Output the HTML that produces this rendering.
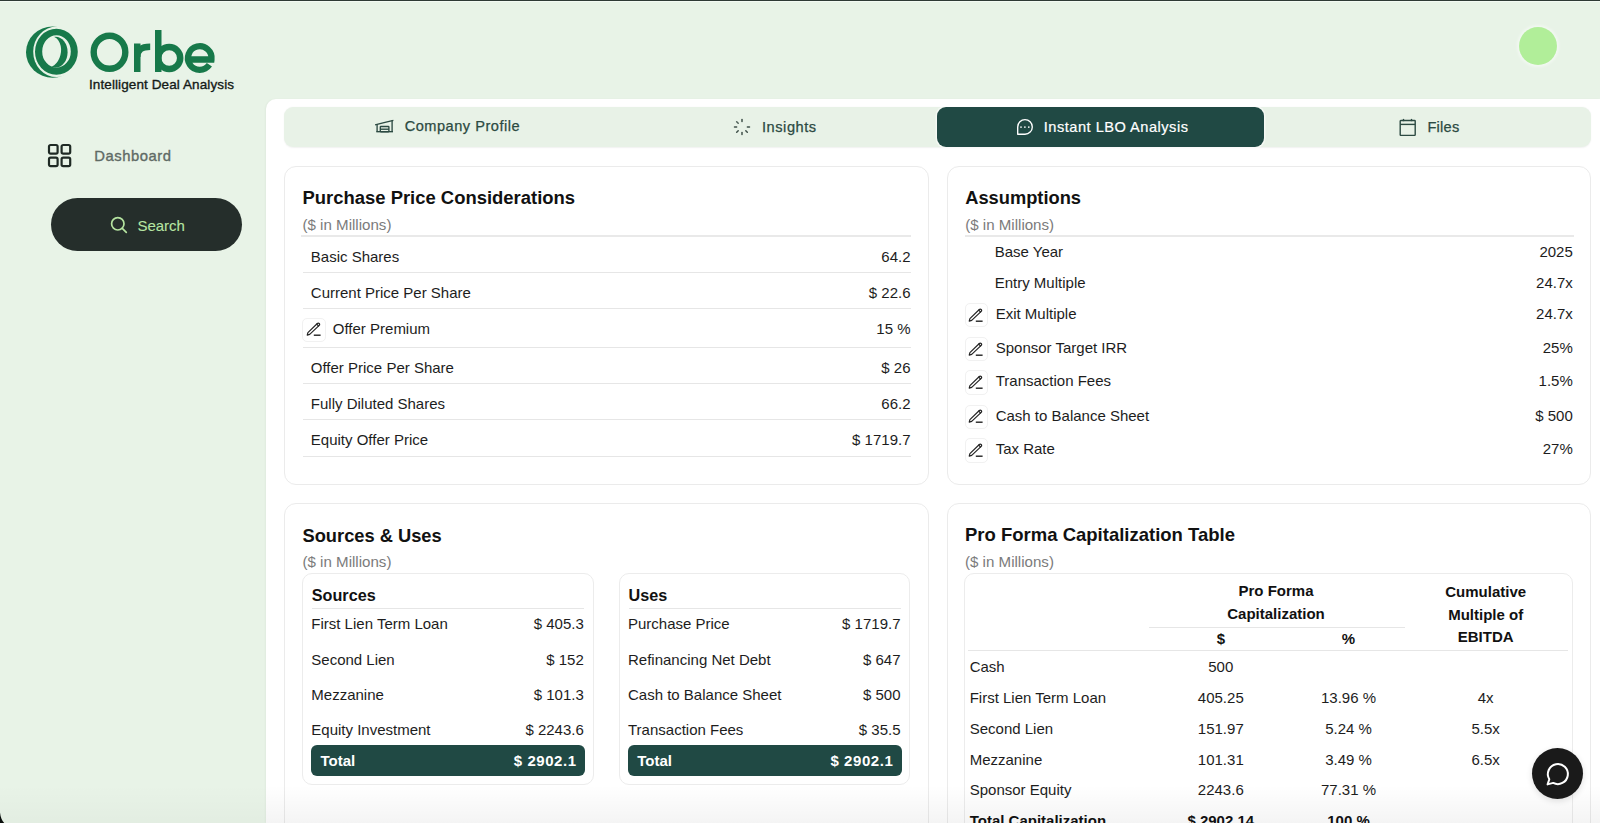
<!DOCTYPE html>
<html><head><meta charset="utf-8"><title>Orbe - Instant LBO Analysis</title>
<style>
html,body{margin:0;padding:0;}
body{width:1600px;height:823px;overflow:hidden;position:relative;background:#e8f3e7;font-family:"Liberation Sans",sans-serif;}
.t{position:absolute;white-space:nowrap;}
</style></head><body>
<div style="position:absolute;left:0px;top:0px;width:1600px;height:1px;background:#2e3a35"></div>
<div style="position:absolute;left:0px;top:1px;width:1600px;height:1px;background:#f3faf3"></div>
<svg style="position:absolute;left:26px;top:26px" width="53" height="53" viewBox="0 0 53 53">
<ellipse cx="26.6" cy="26.2" rx="26.6" ry="25.6" fill="#17794a"/>
<ellipse cx="30.6" cy="25.8" rx="23.4" ry="25.3" fill="#e8f3e7"/>
<ellipse cx="29.6" cy="26.2" rx="12" ry="15.4" fill="#17794a"/>
<ellipse cx="22.6" cy="26.0" rx="12.2" ry="16.2" fill="#e8f3e7" transform="rotate(14 22.6 26)"/>
<path fill-rule="evenodd" fill="#17794a" d="M9.00 25.70 a21.4 23.0 0 1 0 42.80 0 a21.4 23.0 0 1 0 -42.80 0 Z M16.20 25.40 a14.3 16.2 0 1 0 28.60 0 a14.3 16.2 0 1 0 -28.60 0 Z"/>
</svg>
<svg style="position:absolute;left:88px;top:28px" width="130" height="48" viewBox="88 28 130 48">
<ellipse cx="109.5" cy="52.25" rx="15.8" ry="16.5" fill="none" stroke="#17794a" stroke-width="6.4"/>
<rect x="134" y="43.5" width="6.5" height="28.5" fill="#17794a"/>
<path d="M137.25 57 C137.25 50 141.5 46.75 150.2 46.75" fill="none" stroke="#17794a" stroke-width="6.5"/>
<rect x="155" y="30" width="6.5" height="42" fill="#17794a"/>
<circle cx="169.2" cy="58" r="11" fill="none" stroke="#17794a" stroke-width="6.5"/>
<path d="M209.4 64.8 A11.8 11.8 0 1 1 211.45 59.5 L188 59.5" fill="none" stroke="#17794a" stroke-width="6.3"/>
</svg>
<div class="t" style="left:89.00px;top:77.57px;font-size:13.5px;line-height:13.5px;font-weight:400;color:#141a17;letter-spacing:0.1px;-webkit-text-stroke:0.35px #141a17;">Intelligent Deal Analysis</div>
<div style="position:absolute;left:1519px;top:26.5px;width:38px;height:38px;border-radius:50%;background:#b1ee99;box-shadow:0 0 3px 2px rgba(255,255,255,0.45)"></div>
<svg style="position:absolute;left:47px;top:143px" width="25" height="25" viewBox="0 0 25 25">
<g fill="none" stroke="#1f2a25" stroke-width="2.2">
<rect x="2" y="2" width="8.6" height="8.6" rx="1.6"/><rect x="14.6" y="2" width="8.6" height="8.6" rx="1.6"/>
<rect x="2" y="14.6" width="8.6" height="8.6" rx="1.6"/><rect x="14.6" y="14.6" width="8.6" height="8.6" rx="1.6"/>
</g></svg>
<div class="t" style="left:94.20px;top:149.27px;font-size:14.8px;line-height:14.8px;font-weight:400;color:#5f6a65;letter-spacing:0.55px;-webkit-text-stroke:0.35px #5f6a65">Dashboard</div>
<div style="position:absolute;left:51px;top:198px;width:191px;height:53px;border-radius:27px;background:#252e2b"></div>
<svg style="position:absolute;left:110px;top:216px" width="18" height="18" viewBox="0 0 18 18">
<g fill="none" stroke="#b5e4a0" stroke-width="1.7"><circle cx="7.8" cy="7.8" r="6.2"/><path d="M12.3 12.3 L16.3 16.3" stroke-linecap="round"/></g></svg>
<div class="t" style="left:137.40px;top:217.70px;font-size:15px;line-height:15px;font-weight:400;color:#b6e5a2;-webkit-text-stroke:0.1px #b6e5a2">Search</div>
<div style="position:absolute;left:265.5px;top:99px;width:1334.5px;height:724px;background:#ffffff;border-top-left-radius:10px;box-shadow:-1px 0 2px rgba(0,0,0,0.035)"></div>
<div style="position:absolute;left:284px;top:106.8px;width:1307px;height:40.7px;background:#e8f2e7;border-radius:9px;box-shadow:0 0.5px 1.5px rgba(0,40,0,0.06)"></div>
<div style="position:absolute;left:937px;top:107px;width:327px;height:40px;background:#204944;border-radius:9px;box-shadow:0 0 0 1.5px rgba(255,255,255,0.55)"></div>
<svg style="position:absolute;left:374px;top:119px" width="21" height="15" viewBox="0 0 21 15">
<g fill="none" stroke="#2c4a42" stroke-width="1.35" stroke-linejoin="round">
<path d="M2.3 12.7 H19"/><path d="M3.1 5.3 V12.7"/><path d="M18.1 1.5 V12.7"/><path d="M1.1 5.8 L10 3.6 L19.4 1.3"/>
<rect x="6.3" y="7.5" width="8.6" height="5.2" rx="0.6"/><path d="M6.3 10.2 H14.9"/>
</g></svg>
<div class="t" style="left:404.70px;top:119.44px;font-size:14.6px;line-height:14.6px;font-weight:400;color:#2c4a42;letter-spacing:0.5px;-webkit-text-stroke:0.25px #2c4a42">Company Profile</div>
<svg style="position:absolute;left:733px;top:118px" width="18" height="18" viewBox="0 0 18 18">
<g stroke="#3f5049" stroke-width="1.5" stroke-linecap="round">
<path d="M9 1.5 V3.6"/><path d="M9 14.4 V16.5"/><path d="M1.5 9 H3.6"/><path d="M14.4 9 H16.5"/>
<path d="M3.7 3.7 L5.2 5.2" opacity="0.9"/><path d="M12.8 12.8 L14.3 14.3"/><path d="M3.7 14.3 L5.2 12.8"/>
</g></svg>
<div class="t" style="left:762.00px;top:119.94px;font-size:14.6px;line-height:14.6px;font-weight:400;color:#2c4a42;letter-spacing:0.55px;-webkit-text-stroke:0.25px #2c4a42">Insights</div>
<svg style="position:absolute;left:1015.8px;top:118px" width="18" height="18" viewBox="0 0 18 18">
<g fill="none" stroke="#ffffff" stroke-width="1.35"><path d="M1.7 16.2 V8.9 A7.3 7.3 0 1 1 9 16.2 Z" stroke-linejoin="round"/></g>
<g fill="#ffffff"><circle cx="5" cy="9.1" r="0.85"/><circle cx="8.9" cy="9.1" r="0.85"/><circle cx="12.8" cy="9.1" r="0.85"/></g></svg>
<div class="t" style="left:1043.80px;top:119.94px;font-size:14.6px;line-height:14.6px;font-weight:400;color:#ffffff;letter-spacing:0.5px;-webkit-text-stroke:0.2px #fff;">Instant LBO Analysis</div>
<svg style="position:absolute;left:1398px;top:118px" width="19" height="19" viewBox="0 0 19 19">
<g fill="none" stroke="#2c4a42" stroke-width="1.4"><rect x="2.2" y="2.5" width="15" height="14.9" rx="0.6"/><path d="M2.2 6.4 H17.2"/><path d="M5.5 0.9 V3.2"/><path d="M13.5 0.9 V3.2"/></g></svg>
<div class="t" style="left:1427.40px;top:119.94px;font-size:14.6px;line-height:14.6px;font-weight:400;color:#2c4a42;letter-spacing:0.25px;-webkit-text-stroke:0.25px #2c4a42">Files</div>
<div style="position:absolute;left:284px;top:165.5px;width:644.5px;height:319.5px;background:#fff;border:1.5px solid #ebebeb;border-radius:12px;box-sizing:border-box"></div>
<div style="position:absolute;left:946.5px;top:165.5px;width:644.5px;height:319.5px;background:#fff;border:1.5px solid #ebebeb;border-radius:12px;box-sizing:border-box"></div>
<div style="position:absolute;left:284px;top:502.5px;width:644.5px;height:400px;background:#fff;border:1.5px solid #ebebeb;border-radius:12px;box-sizing:border-box"></div>
<div style="position:absolute;left:946.5px;top:502.5px;width:644.5px;height:400px;background:#fff;border:1.5px solid #ebebeb;border-radius:12px;box-sizing:border-box"></div>
<div class="t" style="left:302.50px;top:189.18px;font-size:18.45px;line-height:18.45px;font-weight:700;color:#111;">Purchase Price Considerations</div>
<div class="t" style="left:302.50px;top:216.72px;font-size:15.1px;line-height:15.1px;font-weight:400;color:#7b7b7b;">($ in Millions)</div>
<div style="position:absolute;left:301px;top:235px;width:610px;height:1.5px;background:#e9e9e9"></div>
<div class="t" style="left:310.80px;top:248.70px;font-size:15px;line-height:15px;font-weight:400;color:#1d1d1d;">Basic Shares</div>
<div class="t" style="left:310.50px;width:600px;text-align:right;top:248.70px;font-size:15px;line-height:15px;font-weight:400;color:#1d1d1d;">64.2</div>
<div style="position:absolute;left:303px;top:271.8px;width:608px;height:1px;background:#e6e6e6"></div>
<div class="t" style="left:310.80px;top:284.80px;font-size:15px;line-height:15px;font-weight:400;color:#1d1d1d;">Current Price Per Share</div>
<div class="t" style="left:310.50px;width:600px;text-align:right;top:284.80px;font-size:15px;line-height:15px;font-weight:400;color:#1d1d1d;">$ 22.6</div>
<div style="position:absolute;left:303px;top:307.8px;width:608px;height:1px;background:#e6e6e6"></div>
<div style="position:absolute;left:302.20px;top:317.60px;width:23.4px;height:24.6px;border:1.2px solid #f1f1f1;border-radius:5px;box-sizing:border-box"></div>
<svg style="position:absolute;left:306.00px;top:322.20px" width="17" height="16" viewBox="0 0 17 16">
<g fill="none" stroke="#222" stroke-width="1.15" stroke-linejoin="round" stroke-linecap="round">
<path d="M1.2 13.1 L1.9 10.6 L11.3 1.5 Q12.3 0.6 13.2 1.5 Q14.1 2.4 13.2 3.4 L3.7 12.4 Z"/>
<path d="M10.7 2.1 L12.6 4.0"/><path d="M7.8 13.2 H14.6" stroke-width="1.4" stroke-linecap="butt"/>
</g></svg>
<div class="t" style="left:332.80px;top:320.70px;font-size:15px;line-height:15px;font-weight:400;color:#1d1d1d;">Offer Premium</div>
<div class="t" style="left:310.50px;width:600px;text-align:right;top:320.70px;font-size:15px;line-height:15px;font-weight:400;color:#1d1d1d;">15 %</div>
<div style="position:absolute;left:303px;top:346.8px;width:608px;height:1px;background:#e6e6e6"></div>
<div class="t" style="left:310.80px;top:360.10px;font-size:15px;line-height:15px;font-weight:400;color:#1d1d1d;">Offer Price Per Share</div>
<div class="t" style="left:310.50px;width:600px;text-align:right;top:360.10px;font-size:15px;line-height:15px;font-weight:400;color:#1d1d1d;">$ 26</div>
<div style="position:absolute;left:303px;top:382.9px;width:608px;height:1px;background:#e6e6e6"></div>
<div class="t" style="left:310.80px;top:395.90px;font-size:15px;line-height:15px;font-weight:400;color:#1d1d1d;">Fully Diluted Shares</div>
<div class="t" style="left:310.50px;width:600px;text-align:right;top:395.90px;font-size:15px;line-height:15px;font-weight:400;color:#1d1d1d;">66.2</div>
<div style="position:absolute;left:303px;top:419.4px;width:608px;height:1px;background:#e6e6e6"></div>
<div class="t" style="left:310.80px;top:432.30px;font-size:15px;line-height:15px;font-weight:400;color:#1d1d1d;">Equity Offer Price</div>
<div class="t" style="left:310.50px;width:600px;text-align:right;top:432.30px;font-size:15px;line-height:15px;font-weight:400;color:#1d1d1d;">$ 1719.7</div>
<div style="position:absolute;left:303px;top:455.9px;width:608px;height:1px;background:#e6e6e6"></div>
<div class="t" style="left:965.20px;top:189.31px;font-size:18.3px;line-height:18.3px;font-weight:700;color:#111;">Assumptions</div>
<div class="t" style="left:965.20px;top:216.82px;font-size:15.1px;line-height:15.1px;font-weight:400;color:#7b7b7b;">($ in Millions)</div>
<div style="position:absolute;left:964.5px;top:235px;width:609px;height:1.5px;background:#e9e9e9"></div>
<div class="t" style="left:994.70px;top:243.90px;font-size:15px;line-height:15px;font-weight:400;color:#1d1d1d;">Base Year</div>
<div class="t" style="left:972.80px;width:600px;text-align:right;top:243.90px;font-size:15px;line-height:15px;font-weight:400;color:#1d1d1d;">2025</div>
<div class="t" style="left:994.70px;top:274.90px;font-size:15px;line-height:15px;font-weight:400;color:#1d1d1d;">Entry Multiple</div>
<div class="t" style="left:972.80px;width:600px;text-align:right;top:274.90px;font-size:15px;line-height:15px;font-weight:400;color:#1d1d1d;">24.7x</div>
<div style="position:absolute;left:964.50px;top:302.90px;width:23.4px;height:24.6px;border:1.2px solid #f1f1f1;border-radius:5px;box-sizing:border-box"></div>
<svg style="position:absolute;left:968.30px;top:307.50px" width="17" height="16" viewBox="0 0 17 16">
<g fill="none" stroke="#222" stroke-width="1.15" stroke-linejoin="round" stroke-linecap="round">
<path d="M1.2 13.1 L1.9 10.6 L11.3 1.5 Q12.3 0.6 13.2 1.5 Q14.1 2.4 13.2 3.4 L3.7 12.4 Z"/>
<path d="M10.7 2.1 L12.6 4.0"/><path d="M7.8 13.2 H14.6" stroke-width="1.4" stroke-linecap="butt"/>
</g></svg>
<div class="t" style="left:995.70px;top:306.00px;font-size:15px;line-height:15px;font-weight:400;color:#1d1d1d;">Exit Multiple</div>
<div class="t" style="left:972.80px;width:600px;text-align:right;top:306.00px;font-size:15px;line-height:15px;font-weight:400;color:#1d1d1d;">24.7x</div>
<div style="position:absolute;left:964.50px;top:336.90px;width:23.4px;height:24.6px;border:1.2px solid #f1f1f1;border-radius:5px;box-sizing:border-box"></div>
<svg style="position:absolute;left:968.30px;top:341.50px" width="17" height="16" viewBox="0 0 17 16">
<g fill="none" stroke="#222" stroke-width="1.15" stroke-linejoin="round" stroke-linecap="round">
<path d="M1.2 13.1 L1.9 10.6 L11.3 1.5 Q12.3 0.6 13.2 1.5 Q14.1 2.4 13.2 3.4 L3.7 12.4 Z"/>
<path d="M10.7 2.1 L12.6 4.0"/><path d="M7.8 13.2 H14.6" stroke-width="1.4" stroke-linecap="butt"/>
</g></svg>
<div class="t" style="left:995.70px;top:340.00px;font-size:15px;line-height:15px;font-weight:400;color:#1d1d1d;">Sponsor Target IRR</div>
<div class="t" style="left:972.80px;width:600px;text-align:right;top:340.00px;font-size:15px;line-height:15px;font-weight:400;color:#1d1d1d;">25%</div>
<div style="position:absolute;left:964.50px;top:370.30px;width:23.4px;height:24.6px;border:1.2px solid #f1f1f1;border-radius:5px;box-sizing:border-box"></div>
<svg style="position:absolute;left:968.30px;top:374.90px" width="17" height="16" viewBox="0 0 17 16">
<g fill="none" stroke="#222" stroke-width="1.15" stroke-linejoin="round" stroke-linecap="round">
<path d="M1.2 13.1 L1.9 10.6 L11.3 1.5 Q12.3 0.6 13.2 1.5 Q14.1 2.4 13.2 3.4 L3.7 12.4 Z"/>
<path d="M10.7 2.1 L12.6 4.0"/><path d="M7.8 13.2 H14.6" stroke-width="1.4" stroke-linecap="butt"/>
</g></svg>
<div class="t" style="left:995.70px;top:373.40px;font-size:15px;line-height:15px;font-weight:400;color:#1d1d1d;">Transaction Fees</div>
<div class="t" style="left:972.80px;width:600px;text-align:right;top:373.40px;font-size:15px;line-height:15px;font-weight:400;color:#1d1d1d;">1.5%</div>
<div style="position:absolute;left:964.50px;top:404.70px;width:23.4px;height:24.6px;border:1.2px solid #f1f1f1;border-radius:5px;box-sizing:border-box"></div>
<svg style="position:absolute;left:968.30px;top:409.30px" width="17" height="16" viewBox="0 0 17 16">
<g fill="none" stroke="#222" stroke-width="1.15" stroke-linejoin="round" stroke-linecap="round">
<path d="M1.2 13.1 L1.9 10.6 L11.3 1.5 Q12.3 0.6 13.2 1.5 Q14.1 2.4 13.2 3.4 L3.7 12.4 Z"/>
<path d="M10.7 2.1 L12.6 4.0"/><path d="M7.8 13.2 H14.6" stroke-width="1.4" stroke-linecap="butt"/>
</g></svg>
<div class="t" style="left:995.70px;top:407.80px;font-size:15px;line-height:15px;font-weight:400;color:#1d1d1d;">Cash to Balance Sheet</div>
<div class="t" style="left:972.80px;width:600px;text-align:right;top:407.80px;font-size:15px;line-height:15px;font-weight:400;color:#1d1d1d;">$ 500</div>
<div style="position:absolute;left:964.50px;top:438.10px;width:23.4px;height:24.6px;border:1.2px solid #f1f1f1;border-radius:5px;box-sizing:border-box"></div>
<svg style="position:absolute;left:968.30px;top:442.70px" width="17" height="16" viewBox="0 0 17 16">
<g fill="none" stroke="#222" stroke-width="1.15" stroke-linejoin="round" stroke-linecap="round">
<path d="M1.2 13.1 L1.9 10.6 L11.3 1.5 Q12.3 0.6 13.2 1.5 Q14.1 2.4 13.2 3.4 L3.7 12.4 Z"/>
<path d="M10.7 2.1 L12.6 4.0"/><path d="M7.8 13.2 H14.6" stroke-width="1.4" stroke-linecap="butt"/>
</g></svg>
<div class="t" style="left:995.70px;top:441.20px;font-size:15px;line-height:15px;font-weight:400;color:#1d1d1d;">Tax Rate</div>
<div class="t" style="left:972.80px;width:600px;text-align:right;top:441.20px;font-size:15px;line-height:15px;font-weight:400;color:#1d1d1d;">27%</div>
<div class="t" style="left:302.50px;top:526.51px;font-size:18.3px;line-height:18.3px;font-weight:700;color:#111;">Sources &amp; Uses</div>
<div class="t" style="left:302.50px;top:553.92px;font-size:15.1px;line-height:15.1px;font-weight:400;color:#7b7b7b;">($ in Millions)</div>
<div style="position:absolute;left:302.3px;top:573px;width:291.3px;height:211.7px;background:#fff;border:1px solid #ececec;border-radius:10px;box-sizing:border-box"></div>
<div class="t" style="left:311.80px;top:586.59px;font-size:16.2px;line-height:16.2px;font-weight:700;color:#111;">Sources</div>
<div style="position:absolute;left:311.8px;top:607.8px;width:272.5px;height:1px;background:#e6e6e6"></div>
<div class="t" style="left:311.30px;top:616.00px;font-size:15px;line-height:15px;font-weight:400;color:#1d1d1d;">First Lien Term Loan</div>
<div class="t" style="left:-16.20px;width:600px;text-align:right;top:616.00px;font-size:15px;line-height:15px;font-weight:400;color:#1d1d1d;">$ 405.3</div>
<div class="t" style="left:311.30px;top:651.60px;font-size:15px;line-height:15px;font-weight:400;color:#1d1d1d;">Second Lien</div>
<div class="t" style="left:-16.20px;width:600px;text-align:right;top:651.60px;font-size:15px;line-height:15px;font-weight:400;color:#1d1d1d;">$ 152</div>
<div class="t" style="left:311.30px;top:686.60px;font-size:15px;line-height:15px;font-weight:400;color:#1d1d1d;">Mezzanine</div>
<div class="t" style="left:-16.20px;width:600px;text-align:right;top:686.60px;font-size:15px;line-height:15px;font-weight:400;color:#1d1d1d;">$ 101.3</div>
<div class="t" style="left:311.30px;top:721.70px;font-size:15px;line-height:15px;font-weight:400;color:#1d1d1d;">Equity Investment</div>
<div class="t" style="left:-16.20px;width:600px;text-align:right;top:721.70px;font-size:15px;line-height:15px;font-weight:400;color:#1d1d1d;">$ 2243.6</div>
<div style="position:absolute;left:311.3px;top:745px;width:273.7px;height:30.6px;background:#204944;border-radius:6px"></div>
<div class="t" style="left:320.50px;top:753.00px;font-size:15px;line-height:15px;font-weight:700;color:#fff;">Total</div>
<div class="t" style="left:-23.40px;width:600px;text-align:right;top:753.00px;font-size:15px;line-height:15px;font-weight:700;color:#fff;letter-spacing:0.55px">$ 2902.1</div>
<div style="position:absolute;left:619px;top:573px;width:291.3px;height:211.7px;background:#fff;border:1px solid #ececec;border-radius:10px;box-sizing:border-box"></div>
<div class="t" style="left:628.50px;top:586.59px;font-size:16.2px;line-height:16.2px;font-weight:700;color:#111;">Uses</div>
<div style="position:absolute;left:628.5px;top:607.8px;width:272.5px;height:1px;background:#e6e6e6"></div>
<div class="t" style="left:628.00px;top:616.00px;font-size:15px;line-height:15px;font-weight:400;color:#1d1d1d;">Purchase Price</div>
<div class="t" style="left:300.50px;width:600px;text-align:right;top:616.00px;font-size:15px;line-height:15px;font-weight:400;color:#1d1d1d;">$ 1719.7</div>
<div class="t" style="left:628.00px;top:651.60px;font-size:15px;line-height:15px;font-weight:400;color:#1d1d1d;">Refinancing Net Debt</div>
<div class="t" style="left:300.50px;width:600px;text-align:right;top:651.60px;font-size:15px;line-height:15px;font-weight:400;color:#1d1d1d;">$ 647</div>
<div class="t" style="left:628.00px;top:686.60px;font-size:15px;line-height:15px;font-weight:400;color:#1d1d1d;">Cash to Balance Sheet</div>
<div class="t" style="left:300.50px;width:600px;text-align:right;top:686.60px;font-size:15px;line-height:15px;font-weight:400;color:#1d1d1d;">$ 500</div>
<div class="t" style="left:628.00px;top:721.70px;font-size:15px;line-height:15px;font-weight:400;color:#1d1d1d;">Transaction Fees</div>
<div class="t" style="left:300.50px;width:600px;text-align:right;top:721.70px;font-size:15px;line-height:15px;font-weight:400;color:#1d1d1d;">$ 35.5</div>
<div style="position:absolute;left:628px;top:745px;width:273.7px;height:30.6px;background:#204944;border-radius:6px"></div>
<div class="t" style="left:637.20px;top:753.00px;font-size:15px;line-height:15px;font-weight:700;color:#fff;">Total</div>
<div class="t" style="left:293.30px;width:600px;text-align:right;top:753.00px;font-size:15px;line-height:15px;font-weight:700;color:#fff;letter-spacing:0.55px">$ 2902.1</div>
<div class="t" style="left:965.00px;top:526.34px;font-size:18.5px;line-height:18.5px;font-weight:700;color:#111;">Pro Forma Capitalization Table</div>
<div class="t" style="left:965.00px;top:553.92px;font-size:15.1px;line-height:15.1px;font-weight:400;color:#7b7b7b;">($ in Millions)</div>
<div style="position:absolute;left:964.4px;top:573.4px;width:608.3px;height:400px;background:#fff;border:1px solid #ececec;border-radius:10px;box-sizing:border-box"></div>
<div class="t" style="left:976.00px;width:600px;text-align:center;top:583.40px;font-size:15px;line-height:15px;font-weight:700;color:#111;">Pro Forma</div>
<div class="t" style="left:976.00px;width:600px;text-align:center;top:605.80px;font-size:15px;line-height:15px;font-weight:700;color:#111;">Capitalization</div>
<div style="position:absolute;left:1149px;top:627px;width:256px;height:1px;background:#e6e6e6"></div>
<div class="t" style="left:920.80px;width:600px;text-align:center;top:630.50px;font-size:15px;line-height:15px;font-weight:700;color:#111;">$</div>
<div class="t" style="left:1048.50px;width:600px;text-align:center;top:630.50px;font-size:15px;line-height:15px;font-weight:700;color:#111;">%</div>
<div class="t" style="left:1185.70px;width:600px;text-align:center;top:584.10px;font-size:15px;line-height:15px;font-weight:700;color:#111;">Cumulative</div>
<div class="t" style="left:1185.70px;width:600px;text-align:center;top:606.50px;font-size:15px;line-height:15px;font-weight:700;color:#111;">Multiple of</div>
<div class="t" style="left:1185.70px;width:600px;text-align:center;top:629.10px;font-size:15px;line-height:15px;font-weight:700;color:#111;">EBITDA</div>
<div style="position:absolute;left:968.2px;top:649.7px;width:600px;height:1px;background:#e6e6e6"></div>
<div class="t" style="left:969.70px;top:658.60px;font-size:15px;line-height:15px;font-weight:400;color:#1d1d1d;">Cash</div>
<div class="t" style="left:920.80px;width:600px;text-align:center;top:658.60px;font-size:15px;line-height:15px;font-weight:400;color:#1d1d1d;">500</div>
<div class="t" style="left:1048.50px;width:600px;text-align:center;top:658.60px;font-size:15px;line-height:15px;font-weight:400;color:#1d1d1d;"></div>
<div class="t" style="left:1185.70px;width:600px;text-align:center;top:658.60px;font-size:15px;line-height:15px;font-weight:400;color:#1d1d1d;"></div>
<div class="t" style="left:969.70px;top:689.90px;font-size:15px;line-height:15px;font-weight:400;color:#1d1d1d;">First Lien Term Loan</div>
<div class="t" style="left:920.80px;width:600px;text-align:center;top:689.90px;font-size:15px;line-height:15px;font-weight:400;color:#1d1d1d;">405.25</div>
<div class="t" style="left:1048.50px;width:600px;text-align:center;top:689.90px;font-size:15px;line-height:15px;font-weight:400;color:#1d1d1d;">13.96 %</div>
<div class="t" style="left:1185.70px;width:600px;text-align:center;top:689.90px;font-size:15px;line-height:15px;font-weight:400;color:#1d1d1d;">4x</div>
<div class="t" style="left:969.70px;top:721.20px;font-size:15px;line-height:15px;font-weight:400;color:#1d1d1d;">Second Lien</div>
<div class="t" style="left:920.80px;width:600px;text-align:center;top:721.20px;font-size:15px;line-height:15px;font-weight:400;color:#1d1d1d;">151.97</div>
<div class="t" style="left:1048.50px;width:600px;text-align:center;top:721.20px;font-size:15px;line-height:15px;font-weight:400;color:#1d1d1d;">5.24 %</div>
<div class="t" style="left:1185.70px;width:600px;text-align:center;top:721.20px;font-size:15px;line-height:15px;font-weight:400;color:#1d1d1d;">5.5x</div>
<div class="t" style="left:969.70px;top:751.90px;font-size:15px;line-height:15px;font-weight:400;color:#1d1d1d;">Mezzanine</div>
<div class="t" style="left:920.80px;width:600px;text-align:center;top:751.90px;font-size:15px;line-height:15px;font-weight:400;color:#1d1d1d;">101.31</div>
<div class="t" style="left:1048.50px;width:600px;text-align:center;top:751.90px;font-size:15px;line-height:15px;font-weight:400;color:#1d1d1d;">3.49 %</div>
<div class="t" style="left:1185.70px;width:600px;text-align:center;top:751.90px;font-size:15px;line-height:15px;font-weight:400;color:#1d1d1d;">6.5x</div>
<div class="t" style="left:969.70px;top:782.30px;font-size:15px;line-height:15px;font-weight:400;color:#1d1d1d;">Sponsor Equity</div>
<div class="t" style="left:920.80px;width:600px;text-align:center;top:782.30px;font-size:15px;line-height:15px;font-weight:400;color:#1d1d1d;">2243.6</div>
<div class="t" style="left:1048.50px;width:600px;text-align:center;top:782.30px;font-size:15px;line-height:15px;font-weight:400;color:#1d1d1d;">77.31 %</div>
<div class="t" style="left:1185.70px;width:600px;text-align:center;top:782.30px;font-size:15px;line-height:15px;font-weight:400;color:#1d1d1d;"></div>
<div class="t" style="left:969.70px;top:813.30px;font-size:15px;line-height:15px;font-weight:700;color:#111;">Total Capitalization</div>
<div class="t" style="left:920.80px;width:600px;text-align:center;top:813.30px;font-size:15px;line-height:15px;font-weight:700;color:#111;">$ 2902.14</div>
<div class="t" style="left:1048.50px;width:600px;text-align:center;top:813.30px;font-size:15px;line-height:15px;font-weight:700;color:#111;">100 %</div>
<div style="position:absolute;left:0px;top:785px;width:265.5px;height:38px;background:linear-gradient(to bottom, rgba(0,0,0,0), rgba(0,0,0,0.025))"></div>
<div style="position:absolute;left:265.5px;top:785px;width:1334.5px;height:38px;background:linear-gradient(to bottom, rgba(0,0,0,0), rgba(0,0,0,0.045))"></div>
<svg style="position:absolute;left:0;top:812px" width="12" height="11" viewBox="0 0 12 11"><path d="M0 0.5 Q0.8 7.5 4.2 11 L0 11 Z" fill="#0a0f0c"/></svg>
<div style="position:absolute;left:1532px;top:748px;width:51px;height:51px;border-radius:50%;background:#1a1a1a;box-shadow:0 2px 6px rgba(0,0,0,0.12)"></div>
<svg style="position:absolute;left:1545px;top:762px" width="25" height="25" viewBox="0 0 25 25">
<path d="M2.6 22.4 L4.3 17.2 A10 10 0 1 1 8.2 20.9 Z" fill="none" stroke="#fff" stroke-width="2" stroke-linejoin="round"/></svg>
</body></html>
